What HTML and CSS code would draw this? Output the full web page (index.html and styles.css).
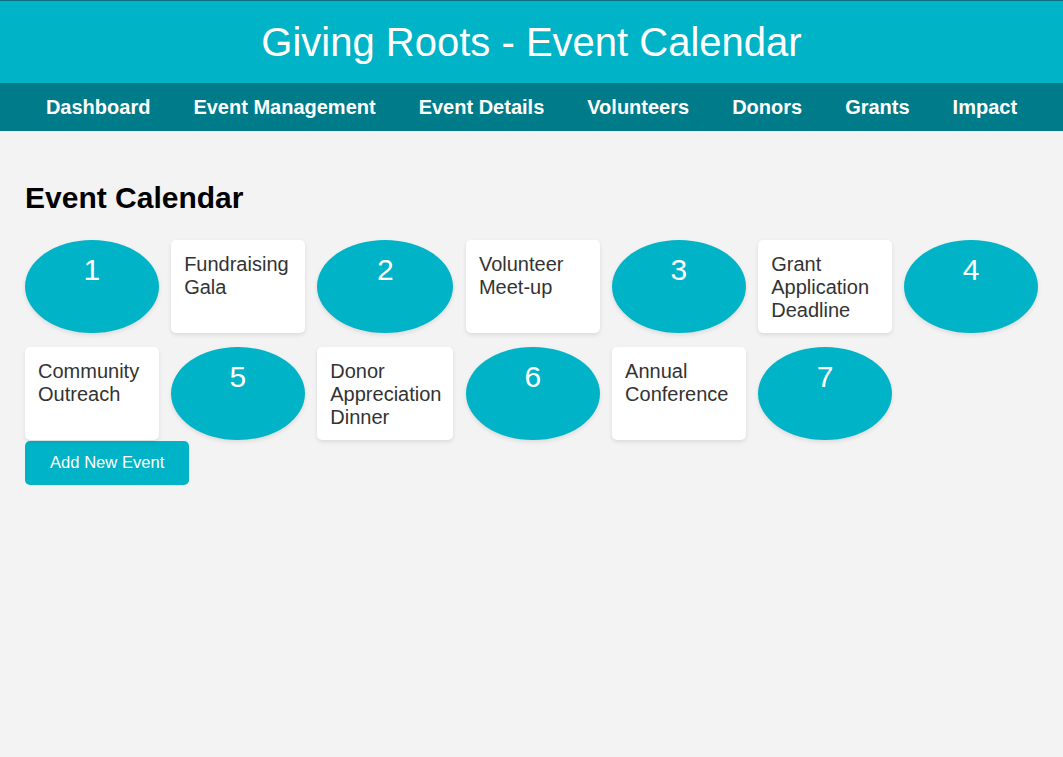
FILE: index.html
```html
<!DOCTYPE html>
<html lang="en">
<head>
<meta charset="utf-8">
<title>Giving Roots - Event Calendar</title>
<link rel="stylesheet" href="styles.css">
</head>
<body>
<header class="site-header">
  <h1 class="site-title">Giving Roots - Event Calendar</h1>
</header>
<nav class="main-nav">
  <a href="#" class="nav-link">Dashboard</a>
  <a href="#" class="nav-link">Event Management</a>
  <a href="#" class="nav-link">Event Details</a>
  <a href="#" class="nav-link">Volunteers</a>
  <a href="#" class="nav-link">Donors</a>
  <a href="#" class="nav-link">Grants</a>
  <a href="#" class="nav-link">Impact</a>
</nav>
<main class="content">
  <h2 class="section-title">Event Calendar</h2>
  <div class="calendar">
    <div class="day">1</div>
    <div class="event">Fundraising Gala</div>
    <div class="day">2</div>
    <div class="event">Volunteer Meet-up</div>
    <div class="day">3</div>
    <div class="event">Grant Application Deadline</div>
    <div class="day">4</div>
    <div class="event">Community Outreach</div>
    <div class="day">5</div>
    <div class="event">Donor Appreciation Dinner</div>
    <div class="day">6</div>
    <div class="event">Annual Conference</div>
    <div class="day">7</div>
  </div>
  <button class="add-btn" type="button">Add New Event</button>
</main>
</body>
</html>
```

FILE: styles.css
```css
html, body {
  margin: 0;
  padding: 0;
}

body {
  background: #f3f3f3;
  font-family: "Liberation Sans", Arial, sans-serif;
  font-size: 20px;
  color: #333;
}

.site-header {
  background: #00b3c6;
  border-top: 1px solid #0b6f7d;
  padding: 18px 0;
  text-align: center;
}

.site-title {
  margin: 0;
  font-size: 40px;
  font-weight: normal;
  line-height: 46px;
  color: #ffffff;
}

.main-nav {
  background: #007b8a;
  display: flex;
  justify-content: center;
}

.nav-link {
  color: #ffffff;
  font-weight: bold;
  text-decoration: none;
  padding: 13px 21.5px 12px;
  line-height: 23px;
}

.content {
  padding: 25px;
}

.section-title {
  margin: 25px 0;
  font-size: 30px;
  font-weight: bold;
  color: #000;
  line-height: 34px;
}

.calendar {
  display: grid;
  grid-template-columns: repeat(7, 1fr);
  gap: 14px 12.5px;
}

.day {
  background: #00b3c6;
  color: #ffffff;
  border-radius: 50%;
  padding: 13px 12px 11px;
  text-align: center;
  font-size: 30px;
  line-height: 34px;
  box-shadow: 0 2px 4px rgba(0, 0, 0, 0.1);
}

.event {
  background: #ffffff;
  color: #333;
  border-radius: 5px;
  padding: 13px 12px 11px 13px;
  line-height: 23px;
  box-shadow: 0 2px 4px rgba(0, 0, 0, 0.1);
}

.add-btn {
  display: block;
  margin-top: 1px;
  background: #00b3c6;
  color: #ffffff;
  border: none;
  border-radius: 5px;
  font-family: "Liberation Sans", Arial, sans-serif;
  font-size: 16.6px;
  padding: 12px 25px;
  line-height: 20px;
  cursor: pointer;
}
```
